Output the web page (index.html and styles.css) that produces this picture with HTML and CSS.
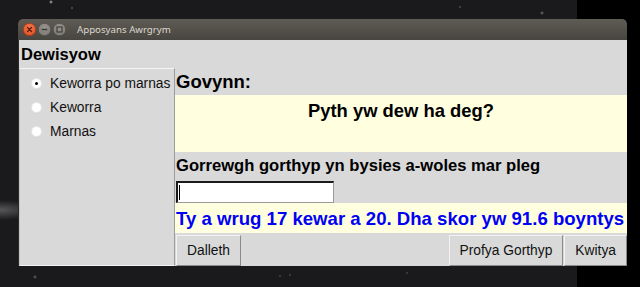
FILE: index.html
```html
<!DOCTYPE html>
<html>
<head>
<meta charset="utf-8">
<link rel="stylesheet" href="styles.css">
</head>
<body>
<div class="desk">
  <div class="window">
    <div class="titlebar">
      <div class="controls">
        <span class="wbtn close"><svg width="13" height="13" viewBox="0 0 13 13"><path d="M4.5 4.5 L8.5 8.5 M8.5 4.5 L4.5 8.5" stroke="#5a1a08" stroke-width="1.3" stroke-linecap="round"/></svg></span>
        <span class="wbtn"><svg width="13" height="13" viewBox="0 0 13 13"><path d="M3.8 6.5 H9.2" stroke="#3a3935" stroke-width="1.4"/></svg></span>
        <span class="wbtn"><svg width="13" height="13" viewBox="0 0 13 13"><rect x="4" y="4" width="5" height="5" fill="none" stroke="#3a3935" stroke-width="1.1"/></svg></span>
      </div>
      <span class="title">Apposyans Awrgrym</span>
    </div>
    <div class="client">
      <div class="left">
        <div class="head">Dewisyow</div>
        <div class="frame">
          <div class="radio"><span class="dot on"></span><span>Keworra po marnas</span></div>
          <div class="radio"><span class="dot"></span><span>Keworra</span></div>
          <div class="radio"><span class="dot"></span><span>Marnas</span></div>
        </div>
      </div>
      <div class="right">
        <div class="q-label">Govynn:</div>
        <div class="question">Pyth yw dew ha deg?</div>
        <div class="prompt">Gorrewgh gorthyp yn bysies a-woles mar pleg</div>
        <div class="entry-row"><div class="entry"><span class="caret"></span></div></div>
        <div class="result">Ty a wrug 17 kewar a 20. Dha skor yw 91.6 boyntys</div>
        <div class="buttons">
          <button class="btn">Dalleth</button>
          <span class="spacer"></span>
          <button class="btn">Profya Gorthyp</button>
          <button class="btn">Kwitya</button>
        </div>
      </div>
    </div>
  </div>
</div>
</body>
</html>
```

FILE: styles.css
```css
html, body {
  margin: 0;
  padding: 0;
}
body {
  width: 640px;
  height: 287px;
  overflow: hidden;
  font-family: "Liberation Sans", Arial, sans-serif;
  background:
    radial-gradient(circle at 51px 2px, rgba(255,255,255,0.7) 0, rgba(255,255,255,0) 2px),
    radial-gradient(circle at 72px 8px, rgba(255,255,255,0.35) 0, rgba(255,255,255,0) 1.5px),
    radial-gradient(circle at 460px 7px, rgba(255,255,255,0.3) 0, rgba(255,255,255,0) 1.5px),
    radial-gradient(circle at 542px 13px, rgba(255,255,255,0.4) 0, rgba(255,255,255,0) 2px),
    radial-gradient(circle at 35px 277px, rgba(255,255,255,0.35) 0, rgba(255,255,255,0) 2px),
    radial-gradient(circle at 280px 276px, rgba(255,255,255,0.25) 0, rgba(255,255,255,0) 1.5px),
    radial-gradient(circle at 290px 275px, rgba(255,255,255,0.25) 0, rgba(255,255,255,0) 1.5px),
    radial-gradient(circle at 407px 273px, rgba(255,255,255,0.25) 0, rgba(255,255,255,0) 1.5px),
    radial-gradient(ellipse 40px 10px at 0 210px, rgba(200,200,200,0.35), rgba(200,200,200,0)),
    linear-gradient(to right, #1a1a1c 0, #1a1a1c 577px, #000 577px, #000 100%);
}
.desk {
  padding: 19px 0 0 18px;
}
.window {
  width: 609px;
}
.titlebar {
  height: 21px;
  border-radius: 5px 5px 0 0;
  background: linear-gradient(#5f5c55, #47453f);
  display: flex;
  align-items: center;
  padding-left: 5px;
  box-sizing: border-box;
}
.controls {
  display: flex;
  gap: 2px;
}
.wbtn {
  width: 13px;
  height: 13px;
  border-radius: 50%;
  background: radial-gradient(circle at 50% 35%, #97948d, #75736d);
  box-shadow: inset 0 0 0 0.5px #3e3d38;
  display: block;
}
.wbtn svg {
  display: block;
}
.wbtn.close {
  background: radial-gradient(circle at 50% 35%, #f47a4c, #d8451c);
  box-shadow: inset 0 0 0 0.5px #8a2a10;
}
.title {
  margin-left: 11px;
  font-family: "Noto Sans", "DejaVu Sans", sans-serif;
  font-size: 9.7px;
  color: #dcd8ce;
  line-height: 1;
}
.client {
  display: grid;
  grid-template-columns: 156px 452px;
  height: 226px;
  background: #d9d9d9;
  border-left: 1px solid #2c2c2c;
}
.left {
  display: flex;
  flex-direction: column;
}
.head {
  height: 28px;
  box-sizing: border-box;
  padding: 1px 0 0 2px;
  display: flex;
  align-items: center;
  font-weight: bold;
  font-size: 16.5px;
  color: #000;
}
.frame {
  flex: 1;
  border-top: 1px solid #f4f4f4;
  border-right: 1px solid #9c9c9c;
  border-bottom: 1px solid #f4f4f4;
  border-left: 1px solid #c4c4c4;
  padding-top: 2px;
}
.radio {
  height: 24px;
  display: flex;
  align-items: center;
  font-size: 13.8px;
  color: #111;
}
.dot {
  width: 9px;
  height: 9px;
  margin: 0 9px 0 12px;
  border-radius: 50%;
  background: #fff;
  box-shadow: 0 0 0 1px #e6e6e6, 0 1px 1px #bdbdbd;
  display: flex;
  align-items: center;
  justify-content: center;
}
.dot.on::after {
  content: "";
  width: 3px;
  height: 3px;
  border-radius: 50%;
  background: #000;
}
.right {
  display: flex;
  flex-direction: column;
  padding-top: 28px;
}
.q-label {
  height: 27px;
  display: flex;
  align-items: center;
  padding-left: 1px;
  font-weight: bold;
  font-size: 18.5px;
}
.question {
  height: 57px;
  box-sizing: border-box;
  background: #ffffe0;
  padding-top: 5px;
  text-align: center;
  font-weight: bold;
  font-size: 18.4px;
  line-height: 21px;
}
.prompt {
  height: 28px;
  display: flex;
  align-items: center;
  padding-left: 1px;
  font-weight: bold;
  font-size: 16.6px;
}
.entry-row {
  height: 23px;
  padding-left: 1px;
  padding-top: 1px;
  box-sizing: border-box;
}
.entry {
  width: 158px;
  height: 22px;
  box-sizing: border-box;
  background: #fff;
  border-style: solid;
  border-width: 2px 1px 1px 2px;
  border-color: #1a1a1a #9a9a9a #9a9a9a #1a1a1a;
  padding: 2px 0 0 1px;
}
.caret {
  display: block;
  width: 1px;
  height: 15px;
  background: #000;
}
.result {
  height: 30px;
  box-sizing: border-box;
  background: #ffffe0;
  padding: 1px 0 0 1px;
  display: flex;
  align-items: center;
  color: #0000f5;
  font-weight: bold;
  font-size: 18.6px;
  white-space: nowrap;
}
.buttons {
  margin-top: 2px;
  height: 31px;
  display: flex;
  gap: 1px;
  padding-left: 1px;
}
.spacer {
  flex: 1;
}
.btn {
  height: 31px;
  margin: 0;
  padding: 0 10px;
  background: #d9d9d9;
  border: 1px solid;
  border-color: #f2f2f2 #8a8a8a #8a8a8a #f2f2f2;
  font-family: "Liberation Sans", Arial, sans-serif;
  font-size: 13.8px;
  color: #111;
  line-height: 1;
}
```
